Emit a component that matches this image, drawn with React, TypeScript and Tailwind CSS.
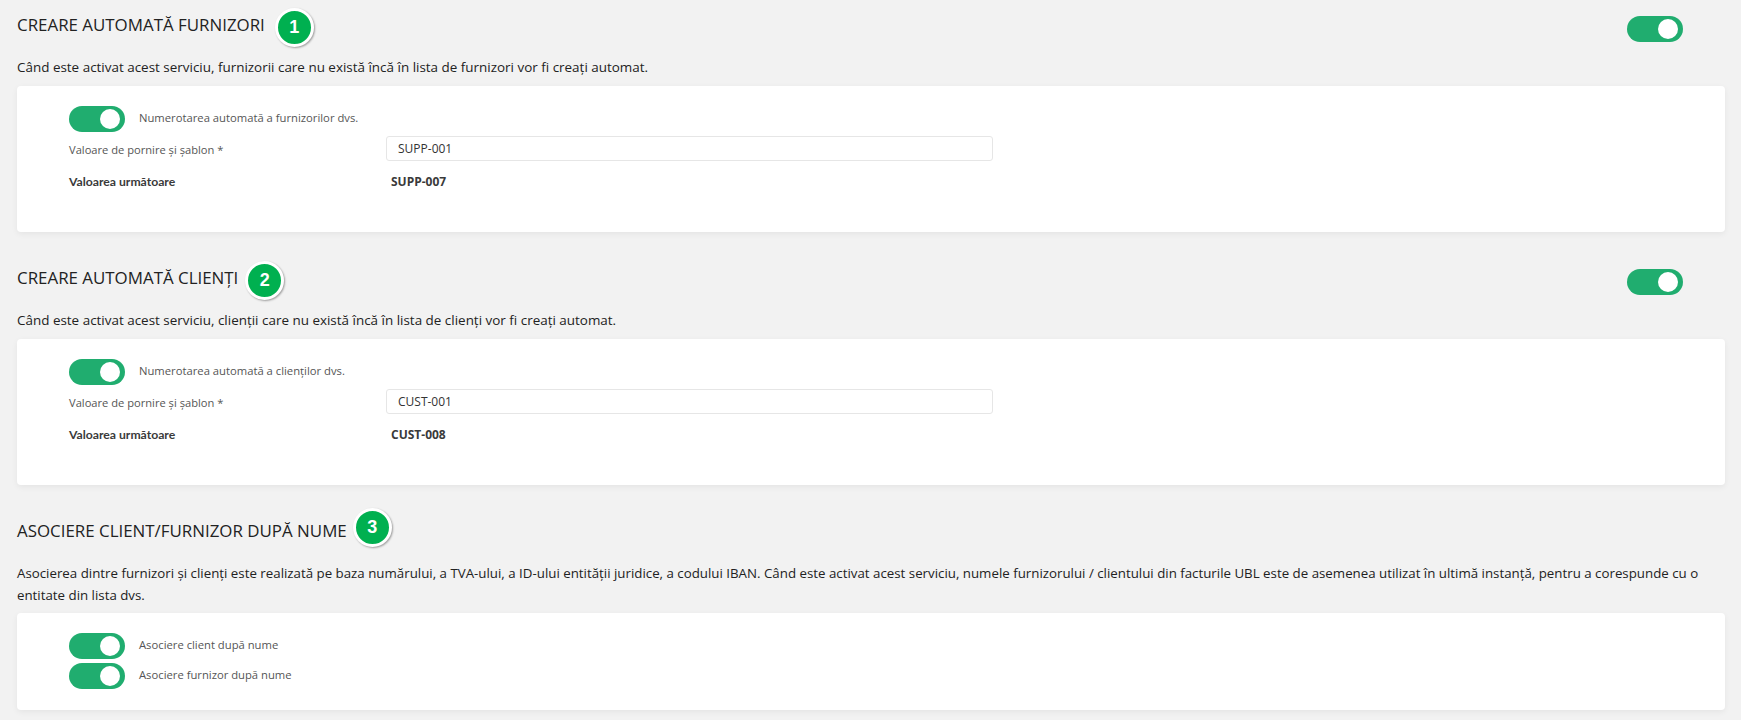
const font = "font-['Open_Sans','Noto_Sans',sans-serif]";

function Toggle({ className = "" }: { className?: string }) {
  return (
    <div className={`w-[56px] h-[26px] rounded-full bg-[#20ad6f] relative shrink-0 ${className}`}>
      <div className="absolute right-[5px] top-[3px] w-[20px] h-[20px] rounded-full bg-white" />
    </div>
  );
}

function Badge({ n }: { n: number }) {
  return (
    <div className="w-[33px] h-[33px] rounded-full bg-[#00b050] border-[3px] border-white shadow-[1px_1px_2px_rgba(0,0,0,0.35)] flex items-center justify-center text-white font-bold text-[18px] font-['Liberation_Sans',sans-serif] box-content shrink-0">
      {n}
    </div>
  );
}

function Head({ title, n, pt, gap, titleClass, toggle }: { title: string; n: number; pt: string; gap: string; titleClass: string; toggle?: boolean }) {
  return (
    <div className={`flex items-center justify-between pr-[42px] ${pt}`}>
      <div className={`flex items-center ${gap}`}>
        <h2 className={`text-[16.9px] text-[#222] font-normal leading-[22px] ${titleClass}`}>{title}</h2>
        <Badge n={n} />
      </div>
      {toggle && <Toggle className="mt-[3px]" />}
    </div>
  );
}

function Form({ label, start, next }: { label: string; start: string; next: string }) {
  return (
    <div className="mt-[8px] bg-white rounded-[4px] shadow-[0_2px_6px_rgba(0,0,0,0.06)] h-[146px] pl-[52px] pt-[20px]">
      <div className="flex items-center gap-[14px] h-[26px]">
        <Toggle />
        <span className="text-[11.25px] text-[#555] pb-[1px]">{label}</span>
      </div>
      <div className="flex items-center mt-[4px] h-[25px]">
        <span className="w-[317px] text-[11.15px] text-[#555] pt-[3px]">Valoare de pornire și șablon *</span>
        <div className="w-[607px] h-[25px] border border-[#e6e6e6] rounded-[3px] pl-[11px] flex items-center text-[12px] text-[#333]">{start}</div>
      </div>
      <div className="flex items-center mt-[10px] h-[22px] text-[#3a3a3a] text-[12px] font-bold">
        <span className="w-[322px] font-['Lato',sans-serif] text-[12.2px]">Valoarea următoare</span>
        <span>{next}</span>
      </div>
    </div>
  );
}

const desc = "text-[13.45px] leading-[22px] text-[#222]";

export default function App() {
  return (
    <div className={`min-h-[720px] bg-[#f2f2f2] pl-[17px] pr-[16px] ${font}`}>
      <Head title="CREARE AUTOMATĂ FURNIZORI" n={1} pt="pt-[8px]" gap="gap-[10px]" titleClass="mb-[6px]" toggle />
      <p className={`mt-[9px] ${desc}`}>Când este activat acest serviciu, furnizorii care nu există încă în lista de furnizori vor fi creați automat.</p>
      <Form label="Numerotarea automată a furnizorilor dvs." start="SUPP-001" next="SUPP-007" />
      <Head title="CREARE AUTOMATĂ CLIENȚI" n={2} pt="pt-[29px]" gap="gap-[7px]" titleClass="mb-[6px]" toggle />
      <p className={`mt-[9px] ${desc}`}>Când este activat acest serviciu, clienții care nu există încă în lista de clienți vor fi creați automat.</p>
      <Form label="Numerotarea automată a clienților dvs." start="CUST-001" next="CUST-008" />
      <Head title="ASOCIERE CLIENT/FURNIZOR DUPĂ NUME" n={3} pt="pt-[23px]" gap="gap-[6px]" titleClass="mt-[6px]" />
      <p className="mt-[15px] text-[13.3px] leading-[22px] text-[#222]">Asocierea dintre furnizori și clienți este realizată pe baza numărului, a TVA-ului, a ID-ului entității juridice, a codului IBAN. Când este activat acest serviciu, numele furnizorului / clientului din facturile UBL este de asemenea utilizat în ultimă instanță, pentru a corespunde cu o entitate din lista dvs.</p>
      <div className="mt-[7px] bg-white rounded-[4px] shadow-[0_2px_6px_rgba(0,0,0,0.06)] h-[97px] pl-[52px] pt-[20px]">
        <div className="flex items-center gap-[14px] h-[26px]"><Toggle /><span className="text-[11.25px] text-[#555] pb-[1px]">Asociere client după nume</span></div>
        <div className="flex items-center gap-[14px] h-[26px] mt-[4px]"><Toggle /><span className="text-[11.25px] text-[#555] pb-[1px]">Asociere furnizor după nume</span></div>
      </div>
    </div>
  );
}
